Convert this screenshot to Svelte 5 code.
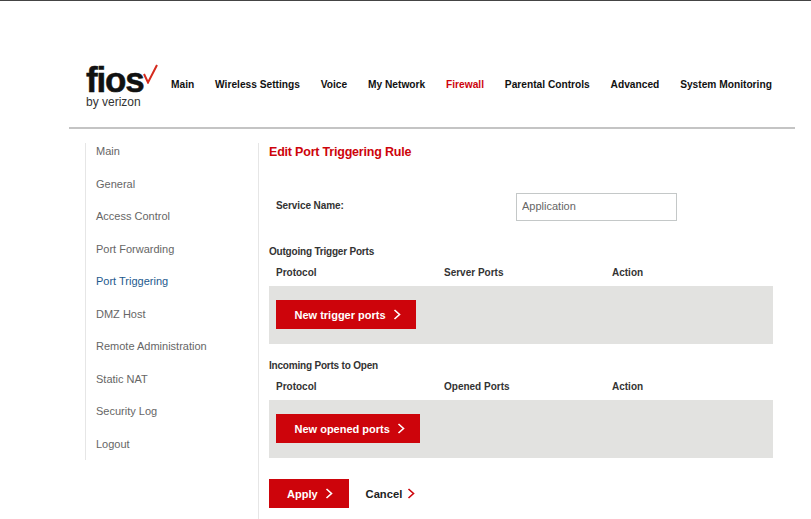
<script>
  const nav = ['Main', 'Wireless Settings', 'Voice', 'My Network', 'Firewall', 'Parental Controls', 'Advanced', 'System Monitoring'];
  const side = ['Main', 'General', 'Access Control', 'Port Forwarding', 'Port Triggering', 'DMZ Host', 'Remote Administration', 'Static NAT', 'Security Log', 'Logout'];
  const sections = [
    { title: 'Outgoing Trigger Ports', col: 'Server Ports', button: 'New trigger ports' },
    { title: 'Incoming Ports to Open', col: 'Opened Ports', button: 'New opened ports' }
  ];
</script>

{#snippet chevron()}
  <svg class="chev" width="8" height="11" viewBox="0 0 8 11"><path d="M1.5 1 L6.5 5.5 L1.5 10" fill="none" stroke="currentColor" stroke-width="1.6" /></svg>
{/snippet}

<div class="page">
  <header>
    <div class="logo">
      <div class="fios">fios<svg class="check" width="15" height="20" viewBox="0 0 15 20"><path d="M1 10 L5 18.5 L14 1" fill="none" stroke="#d52b1e" stroke-width="2" /></svg></div>
      <div class="by">by verizon</div>
    </div>
    <nav>
      {#each nav as item}
        <span class:active={item === 'Firewall'}>{item}</span>
      {/each}
    </nav>
  </header>

  <div class="body">
    <aside>
      {#each side as item}
        <div class="side-item" class:current={item === 'Port Triggering'}>{item}</div>
      {/each}
    </aside>

    <main>
      <h1>Edit Port Triggering Rule</h1>
      <div class="service">
        <span class="label">Service Name:</span>
        <input type="text" value="Application" />
      </div>

      {#each sections as s}
        <section>
          <h2>{s.title}</h2>
          <div class="cols">
            <span>Protocol</span>
            <span>{s.col}</span>
            <span>Action</span>
          </div>
          <div class="band">
            <button class="red">{s.button}{@render chevron()}</button>
          </div>
        </section>
      {/each}

      <div class="actions">
        <button class="red apply">Apply{@render chevron()}</button>
        <button class="cancel">Cancel{@render chevron()}</button>
      </div>
    </main>
  </div>
</div>

<style>
  :global(body) {
    background: #fff;
  }

  .page {
    width: 811px;
    height: 519px;
    overflow: hidden;
    box-sizing: border-box;
    border-top: 1px solid #444;
    font-family: "Liberation Sans", Arial, sans-serif;
    color: #222;
  }

  header {
    box-sizing: border-box;
    height: 128px;
    margin: 0 16px 0 69px;
    padding: 63px 0 0 17px;
    border-bottom: 2px solid #c4c4c4;
    display: flex;
    align-items: flex-start;
  }

  .logo {
    width: 85px;
    flex: none;
    color: #111;
  }

  .fios {
    display: flex;
    align-items: flex-start;
    height: 32px;
    font-size: 35px;
    line-height: 32px;
    font-weight: 700;
    letter-spacing: -1.2px;
    -webkit-text-stroke: 0.5px #111;
  }

  .check {
    margin: 0;
  }

  .by {
    font-size: 12px;
    line-height: 12px;
    color: #333;
  }

  nav {
    display: flex;
    gap: 20.85px;
    padding-top: 14px;
    font-size: 10.2px;
    line-height: 14px;
    font-weight: 700;
    color: #111;
    white-space: nowrap;
  }

  nav .active {
    color: #cd040b;
  }

  .body {
    display: flex;
    padding: 14px 0 0 85px;
  }

  aside {
    box-sizing: border-box;
    width: 173px;
    height: 317px;
    padding: 0 0 0 10px;
    border-left: 1px solid #e6e6e6;
    font-size: 11px;
    color: #666;
  }

  .side-item {
    height: 32.55px;
    line-height: 16px;
  }

  .side-item.current {
    color: #1d5a8e;
  }

  main {
    box-sizing: border-box;
    width: 511px;
    height: 380px;
    padding-left: 10px;
    border-left: 1px solid #e6e6e6;
  }

  h1 {
    margin: 0;
    font-size: 12.5px;
    line-height: 18px;
    font-weight: 700;
    letter-spacing: -0.2px;
    color: #cd040b;
  }

  .service {
    display: flex;
    align-items: center;
    height: 28px;
    margin-top: 32px;
    padding-left: 7px;
  }

  .label {
    width: 240px;
    margin-bottom: 3px;
    font-size: 10px;
    font-weight: 700;
    letter-spacing: -0.1px;
    color: #333;
  }

  input {
    box-sizing: border-box;
    width: 161px;
    height: 28px;
    padding: 0 5px 2px;
    border: 1px solid #c4c8c8;
    font: 11px "Liberation Sans", sans-serif;
    color: #666;
  }

  section {
    margin-top: 24px;
  }

  section + section {
    margin-top: 15px;
  }

  h2 {
    margin: 0;
    font-size: 10px;
    line-height: 14px;
    font-weight: 700;
    letter-spacing: -0.2px;
    color: #333;
  }

  .cols {
    display: grid;
    grid-template-columns: 168px 168px 1fr;
    padding-left: 7px;
    margin-top: 7px;
    height: 20px;
    font-size: 10px;
    line-height: 14px;
    font-weight: 700;
    color: #333;
  }

  .band {
    box-sizing: border-box;
    height: 58px;
    width: 504px;
    padding: 14px 0 0 7px;
    background: #e2e2e0;
  }

  button {
    font-family: inherit;
    font-weight: 700;
    cursor: pointer;
  }

  .red {
    display: inline-flex;
    align-items: center;
    height: 29px;
    padding: 0 15px 0 18.5px;
    border: 0;
    background: #cd040b;
    color: #fff;
    font-size: 11px;
  }

  .chev {
    margin-left: 7px;
  }

  .actions {
    display: flex;
    align-items: center;
    gap: 17px;
    margin-top: 21px;
  }

  .apply {
    padding: 0 16px 0 18px;
  }

  .cancel {
    display: inline-flex;
    align-items: center;
    padding: 0;
    border: 0;
    background: none;
    color: #222;
    font-size: 11.2px;
  }

  .cancel .chev {
    margin-left: 5px;
    color: #cd040b;
  }
</style>
